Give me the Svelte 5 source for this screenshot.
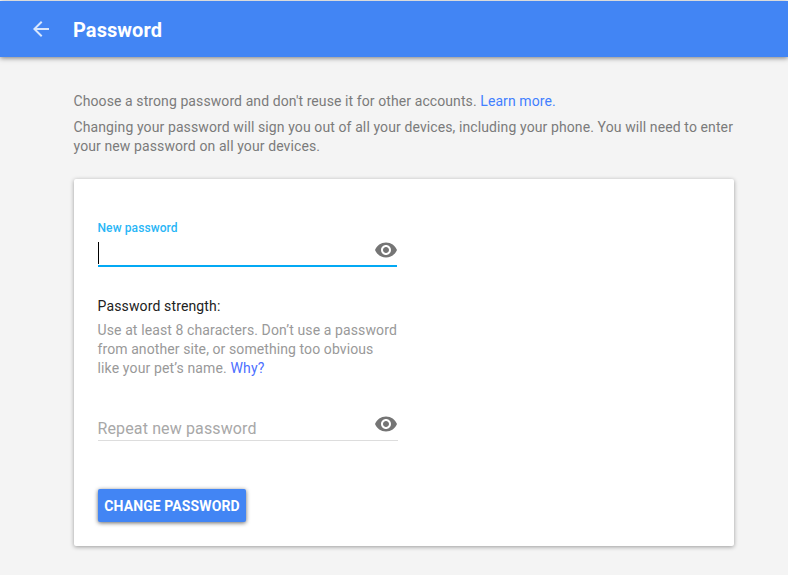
<script>
  let password = $state('');
  let repeated = $state('');
  let showPassword = $state(false);
  let showRepeated = $state(false);
</script>

{#snippet eye()}
  <svg width="24" height="24" viewBox="0 0 24 24" aria-hidden="true">
    <path fill="#757575" d="M12 4.5C7 4.5 2.73 7.61 1 12c1.73 4.39 6 7.5 11 7.5s9.27-3.11 11-7.5c-1.73-4.39-6-7.5-11-7.5zM12 17c-2.76 0-5-2.24-5-5s2.24-5 5-5 5 2.24 5 5-2.24 5-5 5zm0-8c-1.66 0-3 1.34-3 3s1.34 3 3 3 3-1.34 3-3-1.34-3-3-3z" />
  </svg>
{/snippet}

<div class="page">
  <header>
    <button class="back" aria-label="Back">
      <svg width="24" height="24" viewBox="0 0 24 24">
        <path fill="#fff" fill-opacity=".8" d="M20 11H7.83l5.59-5.59L12 4l-8 8 8 8 1.41-1.41L7.83 13H20v-2z" />
      </svg>
    </button>
    <h1>Password</h1>
  </header>

  <main>
    <p class="intro first">Choose a strong password and don't reuse it for other accounts. <a href="#more">Learn more.</a></p>
    <p class="intro second">Changing your password will sign you out of all your devices, including your phone. You will need to enter<br />your new password on all your devices.</p>

    <section class="card">
      <label for="new">New password</label>
      <div class="field active">
        <span class="caret"></span>
        <input id="new" type={showPassword ? 'text' : 'password'} bind:value={password} />
        <button class="toggle" aria-label="Show password" onclick={() => (showPassword = !showPassword)}>{@render eye()}</button>
      </div>

      <h2>Password strength:</h2>
      <p class="hint">Use at least 8 characters. Don’t use a password<br /><span class="tight">from another site, or something too obvious</span><br /><span class="loose">like your pet’s name. <a href="#why">Why?</a></span></p>

      <div class="field repeat">
        <input type={showRepeated ? 'text' : 'password'} placeholder="Repeat new password" bind:value={repeated} />
        <button class="toggle" aria-label="Show password" onclick={() => (showRepeated = !showRepeated)}>{@render eye()}</button>
      </div>

      <button class="submit">CHANGE PASSWORD</button>
    </section>
  </main>
</div>

<style>
  .page {
    box-sizing: border-box;
    height: 575px;
    padding-top: 1px;
    overflow: hidden;
    background: linear-gradient(#fff 1px, #f4f4f4 1px);
    font-family: Roboto, "Liberation Sans", sans-serif;
  }
  header {
    display: flex;
    align-items: center;
    height: 56px;
    padding-left: 29px;
    background: #4285f4;
    box-shadow: 0 1px 5px rgba(0, 0, 0, 0.5);
  }
  button {
    padding: 0;
    border: 0;
    background: none;
    font-family: inherit;
    cursor: pointer;
  }
  svg { display: block; }
  h1 {
    margin: 2px 0 0 20px;
    color: #fff;
    font-size: 20px;
    font-weight: 700;
    line-height: 24px;
    letter-spacing: 0.08px;
  }
  main {
    width: 660px;
    padding: 35px 0 0 74px;
  }
  .intro {
    margin: 0 0 0 -0.5px;
    color: #7b7b7b;
    font-size: 14px;
    line-height: 19px;
    white-space: nowrap;
    letter-spacing: 0.105px;
  }
  .first { letter-spacing: 0.09px; }
  .second { margin-top: 7px; }
  a {
    color: #427fff;
    text-decoration: none;
  }
  .card {
    box-sizing: border-box;
    height: 367px;
    margin-top: 23px;
    padding: 40px 24px 0;
    border-radius: 2px;
    background: #fff;
    box-shadow: 0 1px 4px rgba(0, 0, 0, 0.37);
  }
  label {
    display: block;
    margin-left: -0.5px;
    color: #29b6f6;
    font-size: 12px;
    font-weight: 500;
    line-height: 18px;
    letter-spacing: 0.1px;
  }
  .field {
    box-sizing: border-box;
    display: flex;
    width: 300px;
    height: 30px;
  }
  .active {
    width: 299px;
    padding-top: 1px;
    border-bottom: 2px solid #03a9f4;
  }
  .active .toggle { margin-right: -1px; }
  .caret {
    width: 1px;
    height: 22px;
    margin-top: 4px;
    background: #000;
  }
  input {
    flex: 1;
    min-width: 0;
    padding: 0;
    border: 0;
    outline: 0;
    background: none;
    color: #212121;
    font-family: inherit;
    font-size: 16px;
    letter-spacing: 0.13px;
  }
  input::placeholder {
    color: #a8a8a8;
    opacity: 1;
  }
  h2 {
    margin: 30px 0 5px -0.5px;
    color: #212121;
    font-size: 14px;
    font-weight: 400;
    line-height: 19px;
    letter-spacing: 0.14px;
  }
  .hint {
    margin: 0 0 0 -0.5px;
    color: #999;
    font-size: 14px;
    line-height: 19px;
    white-space: nowrap;
    letter-spacing: 0.11px;
  }
  .tight { letter-spacing: 0.09px; }
  .loose { letter-spacing: 0.14px; }
  .hint a { color: #4c6fff; }
  .repeat {
    height: 29px;
    margin-top: 34px;
    border-bottom: 1px solid #ddd;
  }
  .repeat input {
    margin-left: -0.5px;
    padding-top: 4px;
  }
  .toggle {
    width: 24px;
    height: 24px;
  }
  .submit {
    display: block;
    width: 148px;
    height: 33px;
    margin-top: 48px;
    border-radius: 2px;
    background: #4285f4;
    box-shadow: 0 1px 4px rgba(0, 0, 0, 0.6);
    color: #fff;
    font-size: 14px;
    font-weight: 700;
    line-height: 34px;
    letter-spacing: 0.1px;
    white-space: nowrap;
  }
</style>
